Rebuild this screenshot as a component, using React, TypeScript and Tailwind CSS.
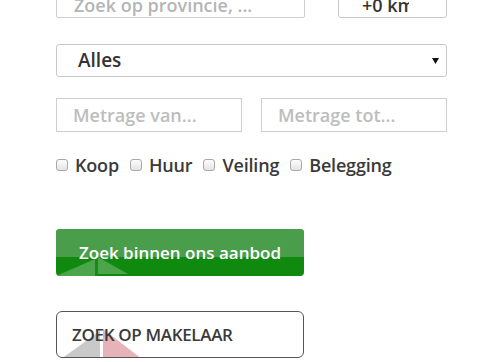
import React from "react";

const font = { fontFamily: '"Open Sans", "Noto Sans", sans-serif' };

function Arrow() {
  return (
    <svg width="7" height="6" viewBox="0 0 7 6" className="shrink-0">
      <path d="M0 0 H7 L3.5 6 Z" fill="#111" />
    </svg>
  );
}

function Check({ label }: { label: string }) {
  return (
    <label className="flex items-center gap-[7px]">
      <span className="w-[12px] h-[12px] rounded-[3px] border border-[#a8a8a8] bg-gradient-to-b from-[#fcfcfc] to-[#e4e4e4]" />
      <span className="text-[18px] font-semibold text-[#3a3a3a] leading-none tracking-[-0.01em]">{label}</span>
    </label>
  );
}

export default function App() {
  return (
    <div className="relative w-[484px] h-[362px] overflow-hidden bg-white" style={font}>
      <div className="pl-[56px] w-[447px] flex flex-col">
        {/* location + radius */}
        <div className="flex items-end justify-between mt-[-16px]">
          <div className="w-[249px] h-[34px] border border-[#cfcfcf] rounded-[2px] flex items-center pl-[17px] pt-[8px] text-[18px] font-semibold text-[#b5b5b5] whitespace-nowrap">
            Zoek op provincie, ...
          </div>
          <div className="w-[109px] h-[33px] border border-[#c8c8c8] rounded-[3px] flex items-center justify-between pl-[23px] pr-[9px] text-[18px] font-semibold text-[#333]">
            <span className="w-[47px] overflow-hidden whitespace-nowrap pt-[7px]">+0 km</span>
            <span className="-mt-[12px]"><Arrow /></span>
          </div>
        </div>

        <div className="mt-[26px] h-[33px] border border-[#c8c8c8] rounded-[3px] flex items-center justify-between pl-[21px] pr-[7px] text-[19px] font-semibold text-[#333]">
          <span>Alles</span>
          <Arrow />
        </div>

        <div className="mt-[21px] flex justify-between">
          <div className="w-[186px] h-[34px] border border-[#cfcfcf] flex items-center pl-[16px] text-[18px] font-semibold text-[#bdbdbd]">
            Metrage van...
          </div>
          <div className="w-[186px] h-[34px] border border-[#cfcfcf] flex items-center pl-[16px] text-[18px] font-semibold text-[#bdbdbd]">
            Metrage tot...
          </div>
        </div>

        <div className="mt-[23px] h-[20px] flex items-center gap-[11px]">
          <Check label="Koop" />
          <Check label="Huur" />
          <Check label="Veiling" />
          <Check label="Belegging" />
        </div>

        <button className="relative mt-[54px] w-[248px] h-[47px] rounded-[4px] overflow-hidden bg-[#0f8a0f] text-white text-[17px] font-semibold flex items-center justify-center">
          <span className="absolute inset-x-0 top-0 h-[28px] bg-[#4a9d4a]" />
          <svg className="absolute left-0 top-0" width="248" height="47" viewBox="0 0 248 47">
            <path d="M0 47 L39 30 L39 47 Z" fill="#4ca44c" />
            <path d="M42 28 L72 45 L42 45 Z" fill="#4ca44c" />
            <rect x="39" y="28" width="3" height="19" fill="#158c15" />
          </svg>
          <span className="relative">Zoek binnen ons aanbod</span>
        </button>

        <button className="relative mt-[35px] w-[248px] h-[47px] rounded-[6px] border border-[#555] bg-white overflow-hidden flex items-center pl-[15px] text-[17px] tracking-[-0.02em] font-semibold text-[#3a3a3a]">
          <svg className="absolute left-0 top-0" width="248" height="47" viewBox="0 0 248 47">
            <path d="M4 47 L43 19 L43 47 Z" fill="#c9c9c9" />
            <path d="M46 17 L85 47 L46 47 Z" fill="#e6b3b8" />
          </svg>
          <span className="relative">ZOEK OP MAKELAAR</span>
        </button>
      </div>
    </div>
  );
}
